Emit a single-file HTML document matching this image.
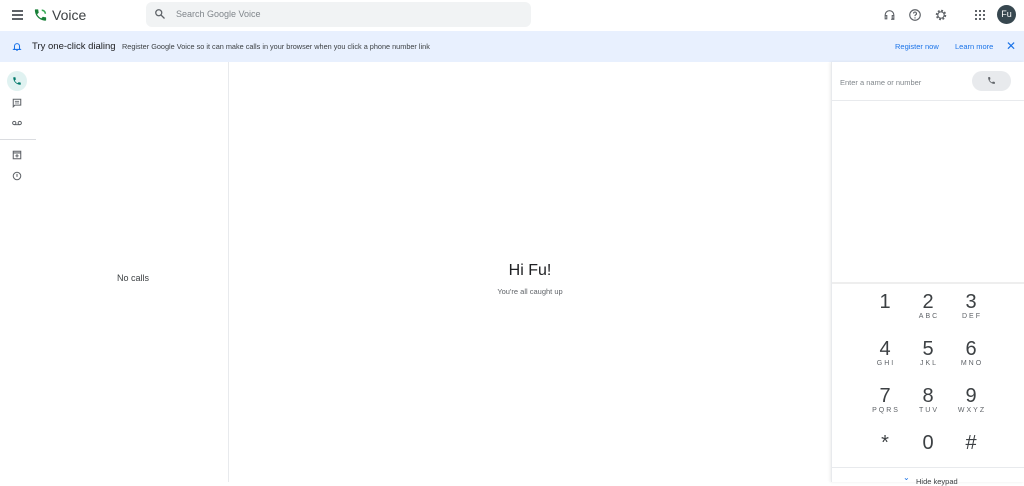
<!DOCTYPE html>
<html><head><style>
*{margin:0;padding:0;box-sizing:border-box}
body{width:1024px;height:482px;overflow:hidden;background:#fff;font-family:"Liberation Sans",Arial,sans-serif;position:relative;color:#3c4043}
.a{position:absolute}
.d{position:absolute;width:40px;text-align:center;font-size:20px;color:#3c4043}
.l{position:absolute;width:40px;text-align:center;font-size:7px;letter-spacing:2px;color:#5f6368}
</style></head><body>
<!-- header -->
<div class="a" style="left:12px;top:10px;width:11px;height:2px;background:#5f6368;box-shadow:0 4px 0 #5f6368,0 8px 0 #5f6368"></div>
<svg class="a" style="left:33px;top:7px" width="15" height="16" viewBox="0 0 24 24"><path d="M6.6 10.8c1.4 2.8 3.8 5.1 6.6 6.6l2.2-2.2c.3-.3.7-.4 1-.2 1.1.4 2.3.6 3.6.6.6 0 1 .4 1 1V20c0 .6-.4 1-1 1C10.6 21 3 13.4 3 4c0-.6.4-1 1-1h3.5c.6 0 1 .4 1 1 0 1.3.2 2.5.6 3.6.1.3 0 .7-.2 1z" fill="#188038"/><path d="M14 3a7 7 0 0 1 7 7h-2.5A4.5 4.5 0 0 0 14 5.5z" fill="#34a853"/></svg>
<div class="a" style="left:52px;top:7px;font-size:14px;color:#3c4043">Voice</div>
<div class="a" style="left:146px;top:2px;width:385px;height:25px;background:#f1f3f4;border-radius:6px"></div>
<svg class="a" style="left:154px;top:8px" width="12" height="12" viewBox="0 0 24 24"><circle cx="9.5" cy="9.5" r="6" fill="none" stroke="#5f6368" stroke-width="2.5"/><path d="M14 14l7 7" stroke="#5f6368" stroke-width="2.5"/></svg>
<div class="a" style="left:176px;top:9px;font-size:9px;color:#80868b">Search Google Voice</div>
<svg class="a" style="left:883px;top:8px" width="13" height="14" viewBox="0 0 24 24"><path d="M4 16v-4a8 8 0 0 1 16 0v4M4 13h3v6H4zM17 13h3v6h-3zM20 19v1h-5" fill="none" stroke="#5f6368" stroke-width="2"/></svg>
<svg class="a" style="left:908px;top:8px" width="14" height="14" viewBox="0 0 24 24"><circle cx="12" cy="12" r="9" fill="none" stroke="#5f6368" stroke-width="2"/><path d="M9.5 9.5a2.5 2.5 0 1 1 3.5 2.3c-.7.4-1 1-1 1.7v.5" fill="none" stroke="#5f6368" stroke-width="2"/><circle cx="12" cy="17" r="1.2" fill="#5f6368"/></svg>
<svg class="a" style="left:934px;top:8px" width="14" height="14" viewBox="0 0 24 24"><circle cx="12" cy="12" r="7" fill="none" stroke="#5f6368" stroke-width="4" stroke-dasharray="3 2.5"/><circle cx="12" cy="12" r="5.5" fill="none" stroke="#5f6368" stroke-width="2"/></svg>
<svg class="a" style="left:975px;top:10px" width="10" height="10" viewBox="0 0 10 10" fill="#5f6368"><rect x="0" y="0" width="2" height="2"/><rect x="4" y="0" width="2" height="2"/><rect x="8" y="0" width="2" height="2"/><rect x="0" y="4" width="2" height="2"/><rect x="4" y="4" width="2" height="2"/><rect x="8" y="4" width="2" height="2"/><rect x="0" y="8" width="2" height="2"/><rect x="4" y="8" width="2" height="2"/><rect x="8" y="8" width="2" height="2"/></svg>
<div class="a" style="left:997px;top:5px;width:19px;height:19px;border-radius:50%;background:#37474f;color:#fff;font-size:9px;text-align:center;line-height:19px">Fu</div>
<!-- banner -->
<div class="a" style="left:0;top:31px;width:1024px;height:31px;background:#e8f0fe"></div>
<svg class="a" style="left:12px;top:41px" width="10" height="11" viewBox="0 0 24 24"><path d="M6 17V11a6 6 0 0 1 12 0v6l2 2H4zM10 21h4" fill="none" stroke="#1a73e8" stroke-width="2.5"/></svg>
<div class="a" style="left:32px;top:41px;font-size:9.5px;color:#202124">Try one-click dialing</div>
<div class="a" style="left:122px;top:42px;font-size:7.3px;color:#3c4043">Register Google Voice so it can make calls in your browser when you click a phone number link</div>
<div class="a" style="left:895px;top:42px;font-size:7.5px;color:#1a73e8">Register now</div>
<div class="a" style="left:955px;top:42px;font-size:7.5px;color:#1a73e8">Learn more</div>
<div class="a" style="left:1006px;top:39px;font-size:12px;color:#1a73e8">✕</div>
<!-- left nav -->
<div class="a" style="left:7px;top:71px;width:20px;height:20px;border-radius:50%;background:#e0f2f1"></div>
<svg class="a" style="left:12px;top:76px" width="10" height="10" viewBox="0 0 24 24"><path d="M6.6 10.8c1.4 2.8 3.8 5.1 6.6 6.6l2.2-2.2c.3-.3.7-.4 1-.2 1.1.4 2.3.6 3.6.6.6 0 1 .4 1 1V20c0 .6-.4 1-1 1C10.6 21 3 13.4 3 4c0-.6.4-1 1-1h3.5c.6 0 1 .4 1 1 0 1.3.2 2.5.6 3.6.1.3 0 .7-.2 1z" fill="#00796b"/></svg>
<svg class="a" style="left:12px;top:98px" width="10" height="10" viewBox="0 0 24 24"><path d="M3 3h18v14H7l-4 4z" fill="none" stroke="#5f6368" stroke-width="2.5"/><path d="M7 8h10M7 12h10" stroke="#5f6368" stroke-width="2"/></svg>
<svg class="a" style="left:12px;top:120px" width="10" height="6" viewBox="0 0 20 10"><circle cx="4.5" cy="5" r="3.3" fill="none" stroke="#5f6368" stroke-width="2"/><circle cx="15.5" cy="5" r="3.3" fill="none" stroke="#5f6368" stroke-width="2"/><path d="M4.5 8.3h11" stroke="#5f6368" stroke-width="2"/></svg>
<div class="a" style="left:0;top:139px;width:36px;height:1px;background:#dadce0"></div>
<svg class="a" style="left:12px;top:150px" width="10" height="10" viewBox="0 0 24 24"><rect x="3" y="3" width="18" height="18" fill="none" stroke="#5f6368" stroke-width="2.5"/><path d="M3 7h18M12 10v8M8 14h8" stroke="#5f6368" stroke-width="2.5"/></svg>
<svg class="a" style="left:12px;top:171px" width="10" height="10" viewBox="0 0 24 24"><circle cx="12" cy="12" r="9" fill="none" stroke="#5f6368" stroke-width="2.5"/><path d="M12 7v7" stroke="#5f6368" stroke-width="2.5"/></svg>
<div class="a" style="left:117px;top:273px;font-size:9px;color:#3c4043">No calls</div>
<div class="a" style="left:228px;top:62px;width:1px;height:420px;background:#e8eaed"></div>
<!-- center -->
<div class="a" style="left:430px;top:262px;width:200px;text-align:center;font-size:16px;color:#202124">Hi Fu!</div>
<div class="a" style="left:430px;top:287px;width:200px;text-align:center;font-size:7.5px;color:#5f6368">You're all caught up</div>
<!-- right panel -->
<div class="a" style="left:831px;top:62px;width:193px;height:420px;border-left:1px solid #e8eaed;box-shadow:-1px 0 3px rgba(0,0,0,.08)"></div>
<div class="a" style="left:840px;top:78px;font-size:7.5px;color:#80868b">Enter a name or number</div>
<div class="a" style="left:972px;top:71px;width:39px;height:20px;border-radius:10px;background:#e8eaed"></div>
<svg class="a" style="left:987px;top:76px" width="9" height="9" viewBox="0 0 24 24"><path d="M6.6 10.8c1.4 2.8 3.8 5.1 6.6 6.6l2.2-2.2c.3-.3.7-.4 1-.2 1.1.4 2.3.6 3.6.6.6 0 1 .4 1 1V20c0 .6-.4 1-1 1C10.6 21 3 13.4 3 4c0-.6.4-1 1-1h3.5c.6 0 1 .4 1 1 0 1.3.2 2.5.6 3.6.1.3 0 .7-.2 1z" fill="#5f6368"/></svg>
<div class="a" style="left:832px;top:100px;width:192px;height:1px;background:#e8eaed"></div>
<div class="a" style="left:832px;top:282px;width:192px;height:2px;background:#eeeeee"></div>
<div class="d" style="left:865px;top:291px">1</div>
<div class="d" style="left:908px;top:291px">2</div><div class="l" style="left:909px;top:313px">ABC</div>
<div class="d" style="left:951px;top:291px">3</div><div class="l" style="left:952px;top:313px">DEF</div>
<div class="d" style="left:865px;top:338px">4</div><div class="l" style="left:866px;top:360px">GHI</div>
<div class="d" style="left:908px;top:338px">5</div><div class="l" style="left:909px;top:360px">JKL</div>
<div class="d" style="left:951px;top:338px">6</div><div class="l" style="left:952px;top:360px">MNO</div>
<div class="d" style="left:865px;top:385px">7</div><div class="l" style="left:866px;top:407px">PQRS</div>
<div class="d" style="left:908px;top:385px">8</div><div class="l" style="left:909px;top:407px">TUV</div>
<div class="d" style="left:951px;top:385px">9</div><div class="l" style="left:952px;top:407px">WXYZ</div>
<div class="d" style="left:865px;top:432px">*</div>
<div class="d" style="left:908px;top:432px">0</div>
<div class="d" style="left:951px;top:432px">#</div>
<div class="a" style="left:832px;top:467px;width:192px;height:1px;background:#e8eaed"></div>
<div class="a" style="left:903px;top:473px;font-size:8px;color:#1a73e8">⌄</div>
<div class="a" style="left:916px;top:477px;font-size:7.5px;color:#3c4043">Hide keypad</div>
</body></html>
